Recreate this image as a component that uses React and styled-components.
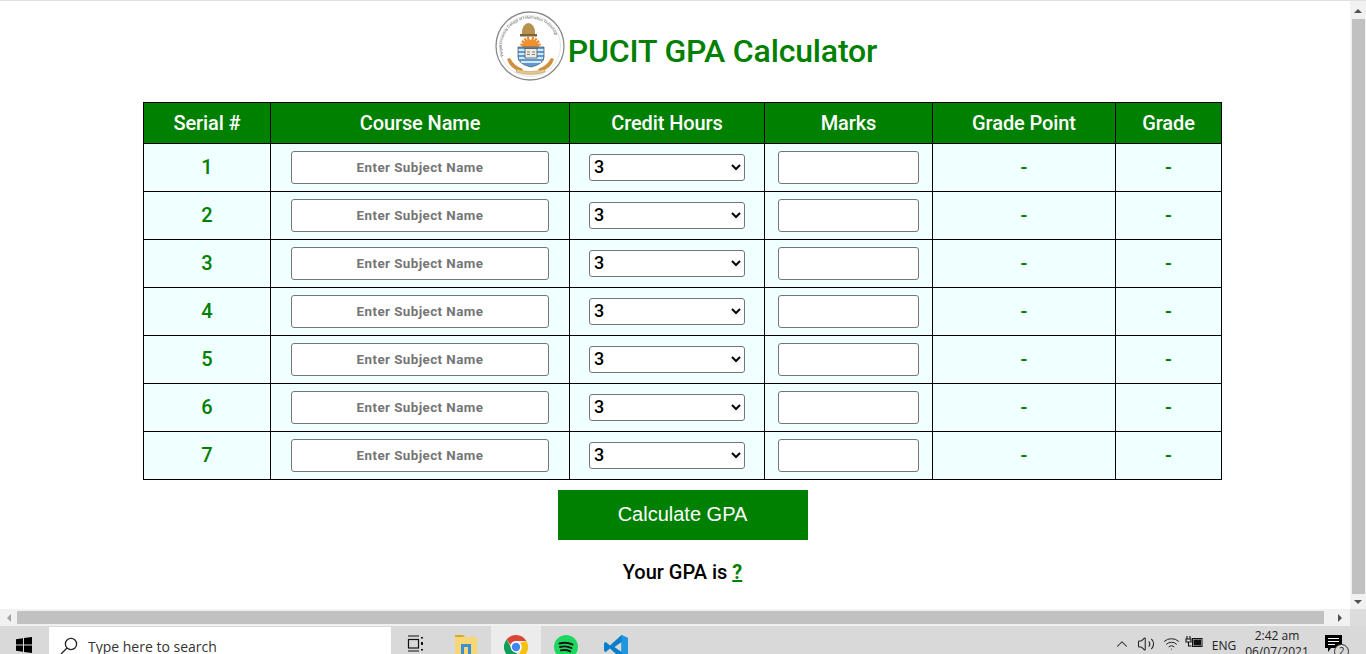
import styled, { createGlobalStyle } from "styled-components";
import { ChevronUp, Volume2, Wifi } from "lucide-react";

const GlobalStyle = createGlobalStyle`
	html, body {
		margin: 0;
		padding: 0;
		overflow: hidden;
		background: #fff;
	}
`;

const Shell = styled.div`
	width: 1366px;
	height: 654px;
	display: flex;
	flex-direction: column;
	overflow: hidden;
	font-family: Roboto, "Liberation Sans", sans-serif;
`;

const Viewport = styled.div`
	height: 609px;
	display: flex;
	border-top: 1px solid #dee1e6;
	box-sizing: border-box;
`;

const Content = styled.main`
	width: 1350px;
	overflow: hidden;
	background: #fff;
`;

const Inner = styled.div`
	width: 1365px;
	display: flex;
	flex-direction: column;
	align-items: center;
	padding-top: 10px;
`;

const Header = styled.header`
	display: flex;
	align-items: center;
	gap: 3px;
	height: 70px;
	padding-left: 7px;
`;

const Logo = styled.svg`
	width: 70px;
	height: 70px;
	filter: blur(0.4px);
`;

const Title = styled.h1`
	margin: 10px 0 0;
	font-size: 32px;
	font-weight: 500;
	letter-spacing: -0.15px;
	color: #008000;
	line-height: 38px;
`;

const Table = styled.table`
	margin-top: 21px;
	width: 1079px;
	table-layout: fixed;
	border-collapse: collapse;
	border: 1px solid #000;
`;

const HeadCell = styled.th`
	box-sizing: border-box;
	height: 41px;
	padding: 0;
	background: #008000;
	color: #fff;
	border: 1px solid #000;
	font-size: 20px;
	font-weight: 500;
	letter-spacing: -0.1px;
	width: ${(p) => p.$width}px;
`;

const Cell = styled.td`
	box-sizing: border-box;
	height: 48px;
	padding: 0;
	background: azure;
	border: 1px solid #000;
	text-align: center;
	vertical-align: middle;
`;

const ValueCell = styled(Cell)`
	padding-bottom: 2px;
	color: #008000;
	font-size: 20px;
	font-weight: 500;
`;

const TextInput = styled.input`
	display: block;
	box-sizing: border-box;
	margin: 0 auto;
	width: ${(p) => p.$width}px;
	height: 33px;
	padding: 0 2px;
	border: 1px solid #767676;
	border-radius: 3px;
	background: #fff;
	text-align: center;
	font-family: Roboto, sans-serif;
	font-size: 13.33px;
	font-weight: 700;
	letter-spacing: 0.45px;

	&::placeholder {
		color: #757575;
		opacity: 1;
	}
`;

const CreditSelect = styled.select`
	display: block;
	box-sizing: border-box;
	margin: 0 auto;
	width: 156px;
	height: 27px;
	padding: 0 0 2px;
	border: 1px solid #767676;
	border-radius: 3px;
	background: #fff;
	color: #000;
	font-family: Roboto, sans-serif;
	font-size: 18px;
	font-weight: 500;
`;

const CalcButton = styled.button`
	margin-top: 10px;
	width: 250px;
	height: 50px;
	padding: 0 0 2px;
	border: 0;
	background: #008000;
	color: #fff;
	font-family: "Liberation Sans", Arial, sans-serif;
	font-size: 20px;
`;

const Result = styled.p`
	margin: 20px 0 0;
	font-size: 20px;
	font-weight: 500;
	line-height: 24px;
	color: #000;
`;

const ResultLink = styled.a`
	color: #008000;
	font-weight: 700;
	text-decoration: underline;
`;

const VScroll = styled.div`
	width: 16px;
	display: flex;
	flex-direction: column;
	align-items: center;
	background: #f1f1f1;
`;

const ScrollArrow = styled.div`
	flex: none;
	width: 0;
	height: 0;
	border-style: solid;
	${(p) => p.$dir === "up" && "margin: 8px 0 5px; border-width: 0 4px 4px; border-color: transparent transparent #505050;"}
	${(p) => p.$dir === "down" && "margin: 6px 0 5px; border-width: 4px 4px 0; border-color: #505050 transparent transparent;"}
	${(p) => p.$dir === "left" && "margin: 0 6px 0 7px; border-width: 4px 4px 4px 0; border-color: transparent #a3a3a3 transparent transparent;"}
	${(p) => p.$dir === "right" && "margin: 0 6px 0 14px; border-width: 4px 0 4px 4px; border-color: transparent transparent transparent #505050;"}
`;

const VThumb = styled.div`
	flex: 1;
	width: 13px;
	margin-top: 1px;
	background: #c1c1c1;
`;

const HScroll = styled.div`
	height: 17px;
	flex: none;
	display: flex;
	align-items: center;
	background: #f1f1f1;
`;

const HThumb = styled.div`
	width: 1307px;
	height: 13px;
	background: #c1c1c1;
`;

const Corner = styled.div`
	width: 16px;
	height: 17px;
	margin-left: auto;
	background: #dcdcdc;
`;

const Taskbar = styled.footer`
	height: 28px;
	flex: none;
	display: flex;
	background: #d9d9d9;
	overflow: hidden;
`;

const StartButton = styled.div`
	width: 49px;
	padding: 11px 0 0 16px;
	box-sizing: border-box;
`;

const SearchBox = styled.div`
	width: 342px;
	height: 40px;
	margin-top: 1px;
	display: flex;
	align-items: flex-start;
	gap: 10px;
	padding: 10px 0 0 11px;
	box-sizing: border-box;
	background: #fff;
	font-size: 14px;
	color: #333;
	font-family: "Open Sans", sans-serif;
	line-height: 20px;
`;

const TaskItem = styled.div`
	width: 50px;
	height: 28px;
	display: flex;
	justify-content: center;
	padding-top: 9px;
	box-sizing: border-box;
	background: ${(p) => (p.$active ? "#ececec" : "transparent")};
`;

const Tray = styled.div`
	margin-left: auto;
	padding-right: 14px;
	display: flex;
	align-items: flex-start;
	color: #222;
`;

const TrayIcon = styled.div`
	position: relative;
	width: ${(p) => p.$width}px;
	padding-top: 9px;
	display: flex;
	justify-content: center;
`;

const TrayLang = styled.div`
	width: 32px;
	padding: 11px 0 0 4px;
	font-family: "Open Sans", sans-serif;
	font-size: 12px;
	text-align: center;
`;

const Clock = styled.div`
	width: 74px;
	padding-top: 2px;
	font-family: "Open Sans", sans-serif;
	font-size: 12px;
	line-height: 16px;
	text-align: center;
`;

const NotifyBadge = styled.span`
	position: absolute;
	left: 20px;
	top: 18px;
	width: 13px;
	height: 13px;
	border: 1px solid #333;
	border-radius: 50%;
	background: #d9d9d9;
	font-family: "Open Sans", sans-serif;
	font-size: 10px;
	line-height: 13px;
	text-align: center;
`;

const COLUMNS = [
	["Serial #", 127],
	["Course Name", 299],
	["Credit Hours", 195],
	["Marks", 168],
	["Grade Point", 183],
	["Grade", 106],
];

const ROWS = [1, 2, 3, 4, 5, 6, 7];

const SUN_RAYS = [-75, -55, -35, -15, 15, 35, 55, 75];

const PucitLogo = () => (
	<Logo viewBox="0 0 70 70">
		<defs>
			<path id="sealArc" d="M9 46 A28 28 0 1 1 61 46" />
		</defs>
		<circle cx="35" cy="35" r="34" fill="#fff" stroke="#8b8b8b" strokeWidth="1.3" />
		<circle cx="35" cy="35" r="30.5" fill="none" stroke="#c8c8c8" strokeWidth="0.5" />
		<text fontSize="3.7" fontFamily="Roboto, sans-serif" fill="#555">
			<textPath href="#sealArc" startOffset="1%">Punjab University College of Information Technology</textPath>
		</text>
		<path d="M27 24 v-3 a6.5 9 0 0 1 13 0 v3z" fill="#b8914f" />
		<rect x="25" y="23" width="17" height="2.5" fill="#7c6438" />
		{SUN_RAYS.map((a) => (
			<path key={a} d="M35.5 36 V25.5" stroke="#ee8a2a" strokeWidth="2.2" transform={`rotate(${a} 35.5 36)`} />
		))}
		<path d="M27 36 a8.5 7 0 0 1 17 0z" fill="#f28f2e" />
		<path d="M23 36 h26 v10 q0 7 -13 10 q-13 -3 -13 -10z" fill="#5b9bd5" stroke="#4a4a4a" strokeWidth="0.7" />
		<path d="M23.5 39 h25 M23.5 43 h25 M24 47 h24 M26 51 h20" stroke="#fff" strokeWidth="1.7" />
		<rect x="30" y="37.5" width="12" height="9.5" fill="#ecece4" stroke="#444" strokeWidth="0.7" />
		<path d="M32 41 h3 M37 41 h3 M32 43.5 h3 M37 43.5 h3" stroke="#666" strokeWidth="0.8" />
		<path d="M15 47 q4 8 13 11 l-2 3 q-11 -3 -14 -13z M56 47 q-4 8 -13 11 l2 3 q11 -3 14 -13z" fill="#d2903f" />
		<path d="M22 58 q13 5 27 0 l1 3 q-14 5 -29 0z" fill="#e3c98f" stroke="#9b7a3e" strokeWidth="0.4" />
	</Logo>
);

const WindowsLogo = () => (
	<svg width="16" height="16" viewBox="0 0 16 16" fill="#000">
		<path d="M0 2.2 7 1.2V7.5H0zM8 1 16 0V7.5H8zM0 8.5H7V14.8L0 13.8zM8 8.5H16V16L8 15z" />
	</svg>
);

const SearchGlyph = () => (
	<svg width="18" height="18" viewBox="0 0 18 18" fill="none" stroke="#222" strokeWidth="1.3">
		<circle cx="11" cy="7" r="5.6" />
		<path d="M7 11 1 17" />
	</svg>
);

const TaskViewGlyph = () => (
	<svg width="18" height="18" viewBox="0 0 18 18" fill="none" stroke="#111" strokeWidth="1.2">
		<path d="M1 1h11M1 16h11" />
		<rect x="1.5" y="4.5" width="10" height="8.5" />
		<path d="M15 2v1.5M15 7v3M15 14v1.5" strokeWidth="2" />
	</svg>
);

const FolderGlyph = () => (
	<svg width="24" height="19" viewBox="0 0 24 19">
		<path d="M1 0h8l2 2H1z" fill="#d9a733" />
		<rect x="1" y="2" width="22" height="18" fill="#f7d774" />
		<rect x="7" y="9" width="10" height="10" fill="#3a8fd6" />
		<rect x="10" y="12" width="4" height="7" fill="#f7d774" />
	</svg>
);

const ChromeGlyph = () => (
	<svg width="24" height="24" viewBox="0 0 24 24">
		<path d="M12 0a12 12 0 0 1 10.4 6H12a6 6 0 0 0-5.6 3.8L2.6 4.6A12 12 0 0 1 12 0z" fill="#db4437" />
		<path d="M22.4 6A12 12 0 0 1 12 24l5.2-9A6 6 0 0 0 16 8z" fill="#f4c20d" />
		<path d="M12 24A12 12 0 0 1 2.6 4.6L7.8 13.5A6 6 0 0 0 13 18z" fill="#0f9d58" />
		<circle cx="12" cy="12" r="5.4" fill="#fff" />
		<circle cx="12" cy="12" r="4.2" fill="#4285f4" />
	</svg>
);

const SpotifyGlyph = () => (
	<svg width="24" height="24" viewBox="0 0 24 24" fill="none">
		<circle cx="12" cy="12" r="12" fill="#1ed760" />
		<path d="M5.5 8.5q7-2 13 1M6 12q6-1.6 11.5 1M6.8 15.4q5-1.2 9.5 .9" stroke="#111" strokeWidth="1.9" strokeLinecap="round" />
	</svg>
);

const VsCodeGlyph = () => (
	<svg width="24" height="24" viewBox="0 0 24 24">
		<path d="M17.5 0 24 3v18l-6.5 3L6 13.5 1.8 17 0 16V8l1.8-1L6 10.5z" fill="#0a7ecb" />
		<path d="M17.5 7 10.5 12l7 5z" fill="#d9d9d9" />
		<path d="M17.5 0 24 3v18l-6.5 3z" fill="#2196e0" />
	</svg>
);

const BatteryGlyph = () => (
	<svg width="18" height="14" viewBox="0 0 18 14" fill="none" stroke="#111">
		<path d="M2 1v3M5 1v3M1 4h5v3H1zM3.5 7v4h3" strokeWidth="1.1" />
		<rect x="7.5" y="3.5" width="9.5" height="8" />
		<rect x="8.5" y="4.5" width="7.5" height="6" fill="#111" stroke="none" />
	</svg>
);

const NotifyGlyph = () => (
	<svg width="17" height="17" viewBox="0 0 17 17">
		<path d="M0 0h17v13H6l-3 4v-4H0z" fill="#000" />
		<path d="M3 3.5h11M3 6.5h11M3 9.5h7" stroke="#fff" />
	</svg>
);

const App = () => {
	return (
		<Shell>
			<GlobalStyle />
			<Viewport>
				<Content>
					<Inner>
						<Header>
							<PucitLogo />
							<Title>PUCIT GPA Calculator</Title>
						</Header>
						<Table>
							<thead>
								<tr>
									{COLUMNS.map(([label, width]) => (
										<HeadCell key={label} $width={width}>{label}</HeadCell>
									))}
								</tr>
							</thead>
							<tbody>
								{ROWS.map((n) => (
									<tr key={n}>
										<ValueCell>{n}</ValueCell>
										<Cell>
											<TextInput $width={258} placeholder="Enter Subject Name" />
										</Cell>
										<Cell>
											<CreditSelect defaultValue="3">
												<option>1</option>
												<option>2</option>
												<option>3</option>
												<option>4</option>
											</CreditSelect>
										</Cell>
										<Cell>
											<TextInput $width={141} />
										</Cell>
										<ValueCell>-</ValueCell>
										<ValueCell>-</ValueCell>
									</tr>
								))}
							</tbody>
						</Table>
						<CalcButton>Calculate GPA</CalcButton>
						<Result>
							Your GPA is <ResultLink href="#">?</ResultLink>
						</Result>
					</Inner>
				</Content>
				<VScroll>
					<ScrollArrow $dir="up" />
					<VThumb />
					<ScrollArrow $dir="down" />
				</VScroll>
			</Viewport>
			<HScroll>
				<ScrollArrow $dir="left" />
				<HThumb />
				<ScrollArrow $dir="right" />
				<Corner />
			</HScroll>
			<Taskbar>
				<StartButton>
					<WindowsLogo />
				</StartButton>
				<SearchBox>
					<SearchGlyph />
					Type here to search
				</SearchBox>
				<TaskItem>
					<TaskViewGlyph />
				</TaskItem>
				<TaskItem>
					<FolderGlyph />
				</TaskItem>
				<TaskItem $active>
					<ChromeGlyph />
				</TaskItem>
				<TaskItem>
					<SpotifyGlyph />
				</TaskItem>
				<TaskItem>
					<VsCodeGlyph />
				</TaskItem>
				<Tray>
					<TrayIcon $width={24}><ChevronUp size={18} strokeWidth={1.4} /></TrayIcon>
					<TrayIcon $width={24}><Volume2 size={18} strokeWidth={1.4} /></TrayIcon>
					<TrayIcon $width={26}><Wifi size={17} strokeWidth={1.4} /></TrayIcon>
					<TrayIcon $width={20}><BatteryGlyph /></TrayIcon>
					<TrayLang>ENG</TrayLang>
					<Clock>
						2:42 am
						<br />
						06/07/2021
					</Clock>
					<TrayIcon $width={38}>
						<NotifyGlyph />
						<NotifyBadge>2</NotifyBadge>
					</TrayIcon>
				</Tray>
			</Taskbar>
		</Shell>
	);
};

export default App;
